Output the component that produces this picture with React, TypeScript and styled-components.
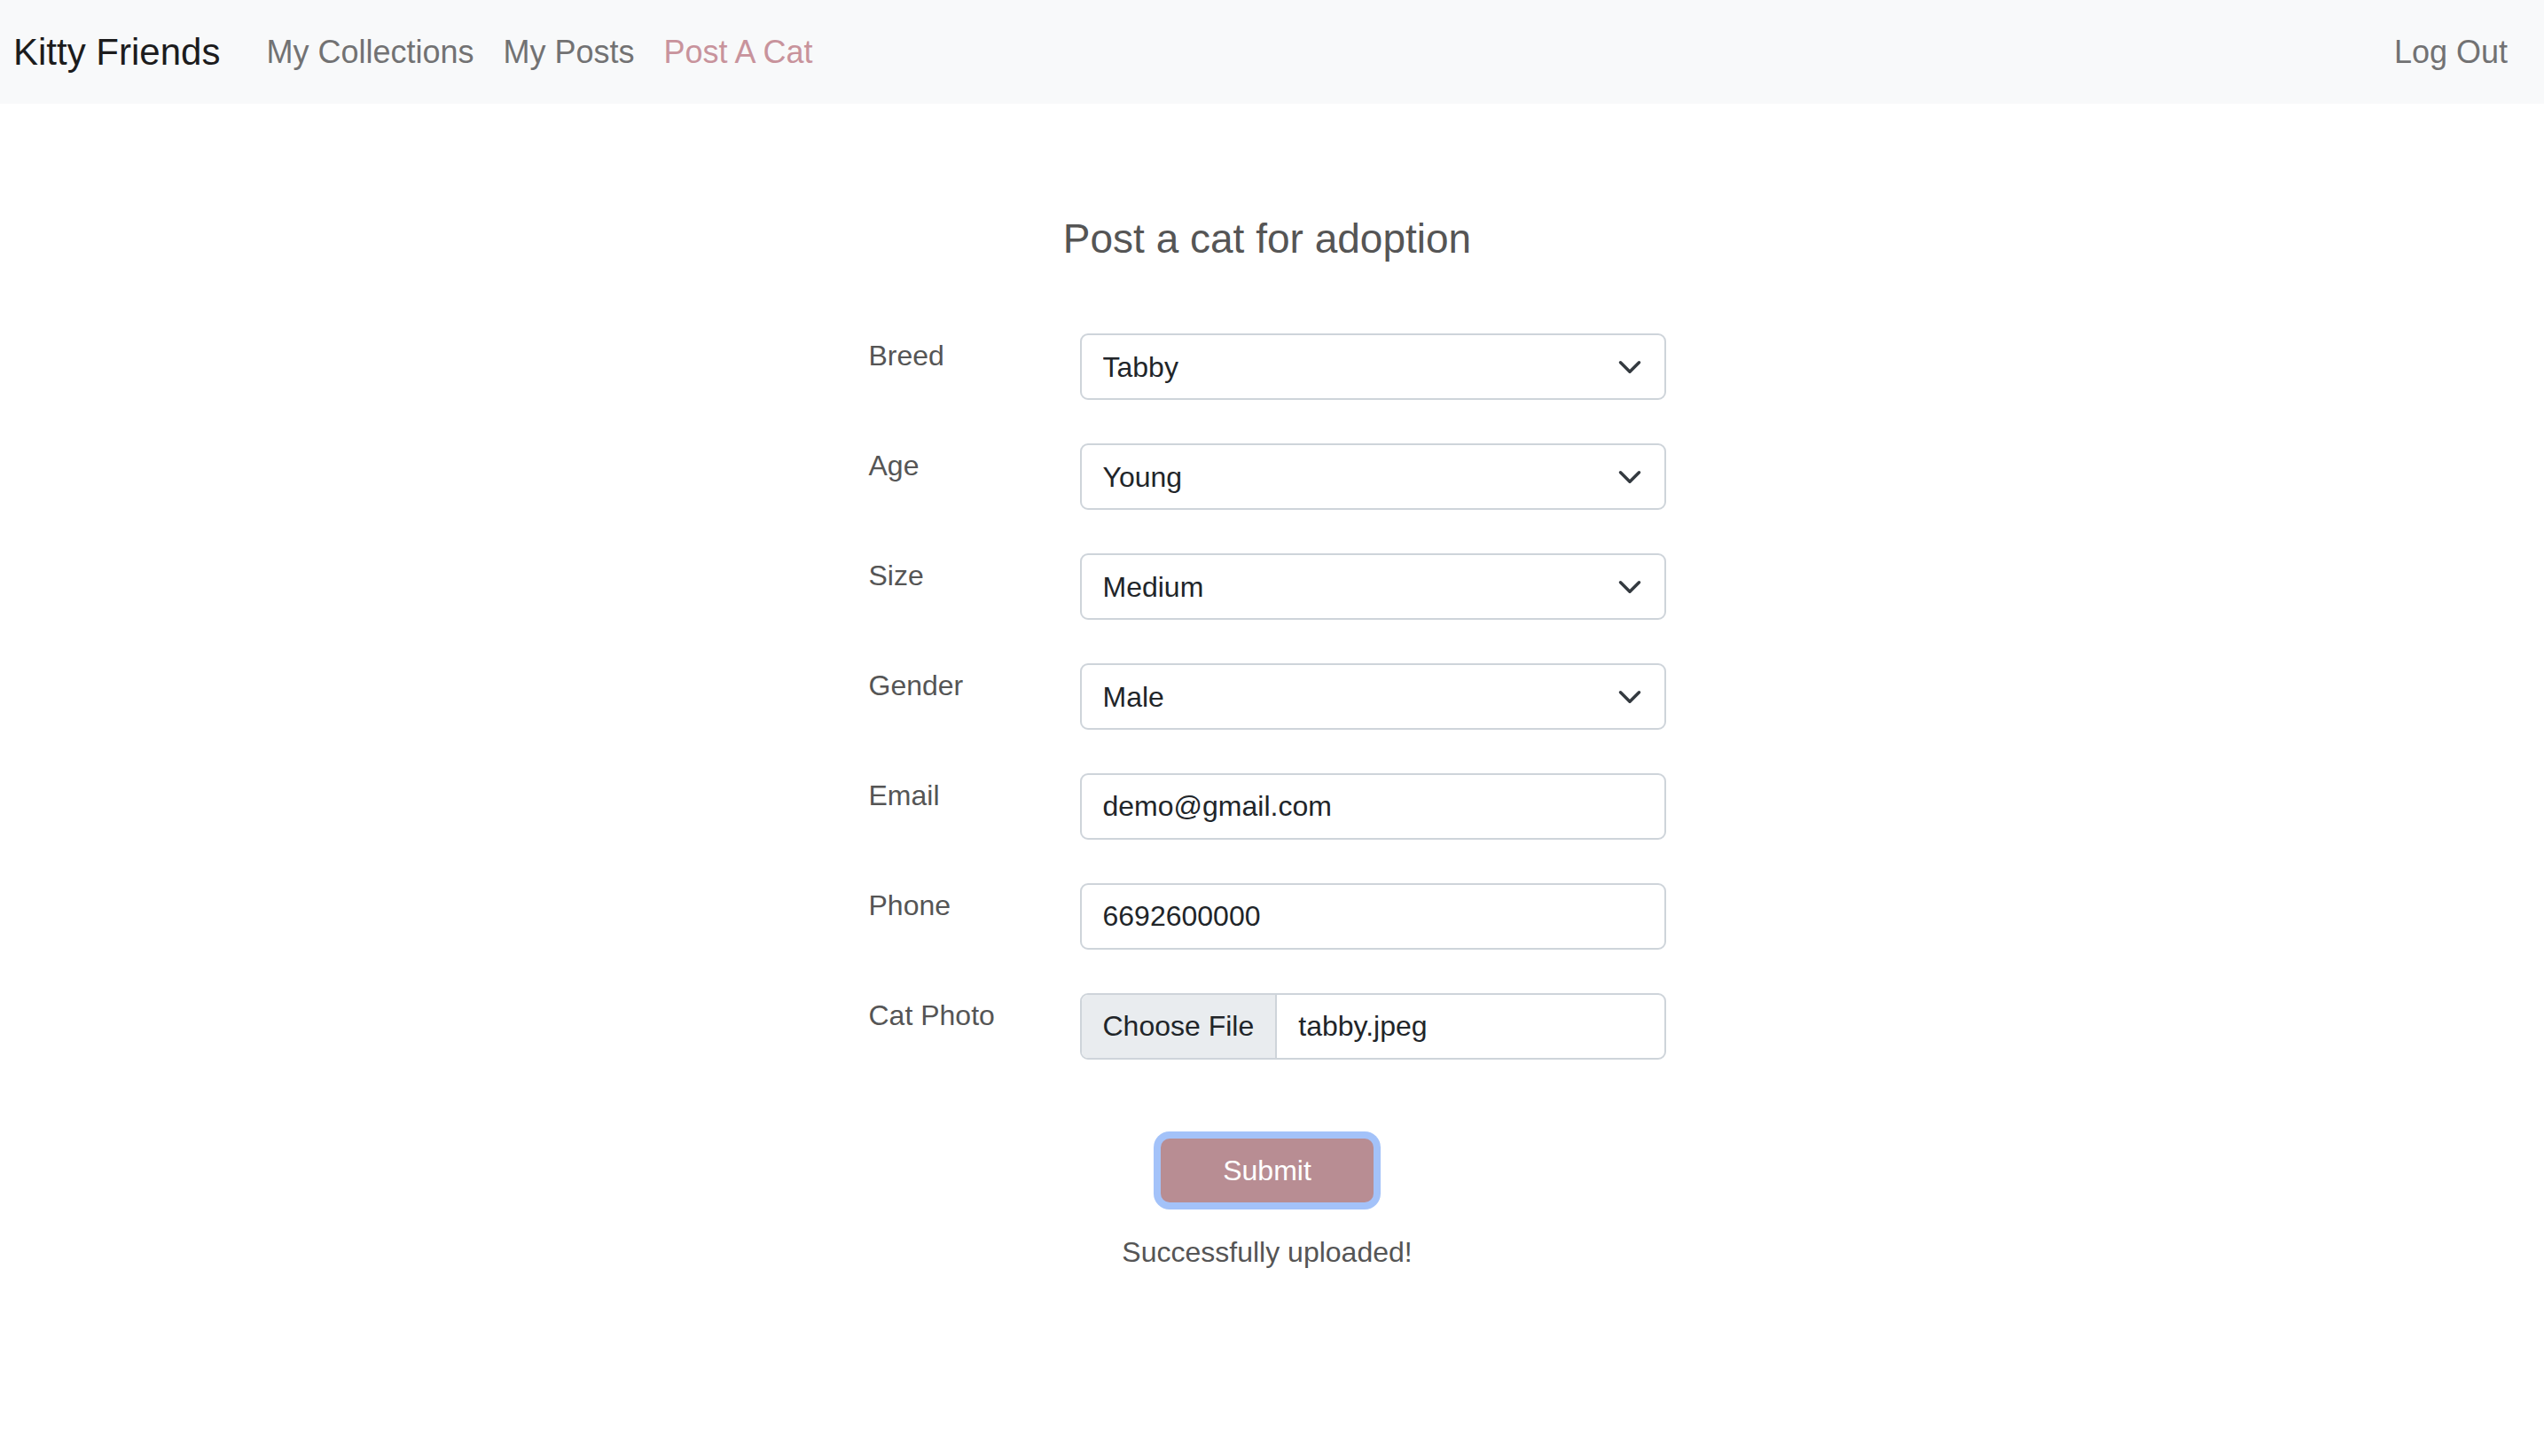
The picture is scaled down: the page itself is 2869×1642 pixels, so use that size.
import React from "react";
import styled, { createGlobalStyle } from "styled-components";

const GlobalStyle = createGlobalStyle`
  html, body {
    margin: 0;
    padding: 0;
    background: #ffffff;
    font-family: "Liberation Sans", Arial, sans-serif;
  }
  * { box-sizing: border-box; }
`;

const NavBar = styled.nav`
  display: flex;
  align-items: center;
  height: 117px;
  padding: 0 41px 0 15px;
  background: #f8f9fa;
`;

const Brand = styled.a`
  font-size: 42px;
  color: #1c1c1d;
  text-decoration: none;
  margin-right: 52px;
  white-space: nowrap;
`;

const NavList = styled.div`
  display: flex;
  align-items: center;
  gap: 33px;
  flex: 1;
`;

const NavLink = styled.a<{ $active?: boolean }>`
  font-size: 36px;
  color: ${(p) => (p.$active ? "#c8939c" : "#727273")};
  text-decoration: none;
  white-space: nowrap;
`;

const Main = styled.main`
  display: flex;
  flex-direction: column;
  align-items: center;
  padding: 125px 11px 0 0;
`;

const Title = styled.h2`
  margin: 0 0 79px;
  font-size: 46px;
  font-weight: 400;
  line-height: 1.2;
  color: #555555;
`;

const Form = styled.form`
  width: 899px;
  display: flex;
  flex-direction: column;
  gap: 49px;
`;

const Row = styled.div`
  display: grid;
  grid-template-columns: 238px 661px;
  align-items: start;
`;

const Label = styled.label`
  font-size: 32px;
  line-height: 48px;
  padding-top: 1px;
  color: #555555;
`;

const controlBase = `
  width: 100%;
  height: 75px;
  border: 2px solid #ced4da;
  border-radius: 9px;
  background: #ffffff;
  font-family: "Liberation Sans", Arial, sans-serif;
  font-size: 32px;
  color: #212529;
  outline: none;
`;

const SelectWrap = styled.div`
  position: relative;
`;

const Select = styled.select`
  ${controlBase}
  appearance: none;
  -webkit-appearance: none;
  padding: 0 80px 0 24px;
`;

const Chevron = styled.svg`
  position: absolute;
  right: 27px;
  top: 50%;
  transform: translateY(-50%);
  width: 28px;
  height: 28px;
  pointer-events: none;
`;

const TextInput = styled.input`
  ${controlBase}
  padding: 0 24px;
`;

const FileBox = styled.div`
  ${controlBase}
  display: flex;
  align-items: stretch;
  overflow: hidden;
`;

const FileButton = styled.span`
  display: flex;
  align-items: center;
  padding: 0 24px;
  background: #e9ecef;
  border-right: 2px solid #ced4da;
  white-space: nowrap;
`;

const FileName = styled.span`
  display: flex;
  align-items: center;
  padding: 0 24px;
`;

const SubmitButton = styled.button`
  align-self: center;
  margin-top: 40px;
  width: 240px;
  height: 72px;
  border: none;
  border-radius: 10px;
  background: #b88d93;
  color: #ffffff;
  font-family: "Liberation Sans", Arial, sans-serif;
  font-size: 32px;
  box-shadow: 0 0 0 8px #a3c2f9;
  cursor: pointer;
`;

const Message = styled.p`
  margin: 32px 0 0;
  font-size: 32px;
  line-height: 48px;
  color: #555555;
`;

const SelectField = ({ value, options }: { value: string; options: string[] }) => (
  <SelectWrap>
    <Select defaultValue={value}>
      {options.map((o) => (
        <option key={o} value={o}>
          {o}
        </option>
      ))}
    </Select>
    <Chevron viewBox="0 0 16 16">
      <path
        d="m2 5 6 6 6-6"
        fill="none"
        stroke="#343a40"
        strokeWidth={2}
        strokeLinecap="round"
        strokeLinejoin="round"
      />
    </Chevron>
  </SelectWrap>
);

export default function App() {
  return (
    <>
      <GlobalStyle />
      <NavBar>
        <Brand href="#">Kitty Friends</Brand>
        <NavList>
          <NavLink href="#">My Collections</NavLink>
          <NavLink href="#">My Posts</NavLink>
          <NavLink href="#" $active>
            Post A Cat
          </NavLink>
        </NavList>
        <NavLink href="#">Log Out</NavLink>
      </NavBar>
      <Main>
        <Title>Post a cat for adoption</Title>
        <Form onSubmit={(e) => e.preventDefault()}>
          <Row>
            <Label>Breed</Label>
            <SelectField value="Tabby" options={["Tabby", "Siamese", "Persian", "Maine Coon"]} />
          </Row>
          <Row>
            <Label>Age</Label>
            <SelectField value="Young" options={["Kitten", "Young", "Adult", "Senior"]} />
          </Row>
          <Row>
            <Label>Size</Label>
            <SelectField value="Medium" options={["Small", "Medium", "Large"]} />
          </Row>
          <Row>
            <Label>Gender</Label>
            <SelectField value="Male" options={["Male", "Female"]} />
          </Row>
          <Row>
            <Label>Email</Label>
            <TextInput type="email" defaultValue="demo@gmail.com" />
          </Row>
          <Row>
            <Label>Phone</Label>
            <TextInput type="text" defaultValue="6692600000" />
          </Row>
          <Row>
            <Label>Cat Photo</Label>
            <FileBox>
              <FileButton>Choose File</FileButton>
              <FileName>tabby.jpeg</FileName>
            </FileBox>
          </Row>
          <SubmitButton type="submit">Submit</SubmitButton>
        </Form>
        <Message>Successfully uploaded!</Message>
      </Main>
    </>
  );
}
